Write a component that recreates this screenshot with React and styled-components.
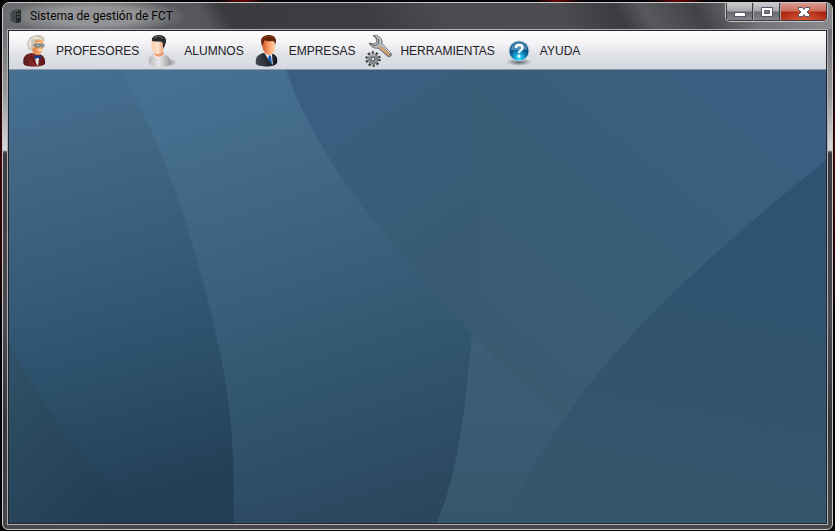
import React from "react";
import styled, { createGlobalStyle } from "styled-components";

const GlobalStyle = createGlobalStyle`
  * { box-sizing: border-box; }
  html, body { margin: 0; background: #080305; }
`;

const Desktop = styled.div`
  display: flex;
  min-height: 100vh;
  padding: 2px 2px 1px;
  background:
    radial-gradient(ellipse 22px 4px at 242px 0, #7a0508, transparent),
    radial-gradient(ellipse 22px 4px at 558px 0, #7a0508, transparent),
    radial-gradient(ellipse 26px 4px at 678px 0, #7a0508, transparent),
    linear-gradient(#080305 50px, #3c0506 160px, #2a0305 250px, #050304 320px);
`;

const Frame = styled.section`
  flex: 1;
  display: flex;
  flex-direction: column;
  min-width: 0;
  padding: 0 4px 4px;
  border: 1px solid #c9c9cc;
  border-radius: 7px 7px 6px 6px;
  overflow: hidden;
  background:
    linear-gradient(#58595c 0, #77787b 40px, #98989a 90px, #d8d8da 147px, #505155 149px, #39393e 151px, #4a4a50 320px, #36363b 420px, #48484c 100%);
`;

const TitleBar = styled.header`
  display: flex;
  align-items: flex-start;
  height: 26px;
  margin: 0 -4px;
  padding: 0 4px 0 6px;
  background:
    radial-gradient(ellipse 92px 18px at 92px 13px, rgba(180, 180, 182, 0.6) 50%, rgba(180, 180, 182, 0) 100%),
    linear-gradient(60deg, #6d6e71 0, #55565a 180px, #3b3c40 200px, #3c3d41 320px, #4b4c50 390px, #4c4d51 490px, #3b3c40 540px, #58595c 565px, #424347 610px, #737478 655px, #89898c 710px);
`;

const Title = styled.h1`
  flex: 1;
  display: flex;
  align-items: center;
  gap: 7px;
  height: 26px;
  margin: 0;
  color: #050505;
  font: 400 12px/16px Roboto, "Open Sans", sans-serif;
  white-space: nowrap;
`;

const WindowControls = styled.div`
  display: flex;
  height: 19px;
  border: 1px solid #c4c4c6;
  border-top: 0;
  border-radius: 0 0 5px 5px;
  overflow: hidden;
`;

const ControlButton = styled.button`
  display: grid;
  place-items: center;
  width: ${({ $close }) => ($close ? "47px" : "27px")};
  height: 18px;
  padding: 0;
  border: 1px solid #3b3b40;
  border-top: 0;
  border-left: ${({ $first }) => ($first ? "1px solid #3b3b40" : "1px solid #a9a9ac")};
  background: ${({ $close }) =>
    $close
      ? "radial-gradient(ellipse at 50% 100%, rgba(230,105,60,.65), transparent 65%), linear-gradient(#d9998e, #c96f60 8px, #a9200d 9px, #bd3b25)"
      : "linear-gradient(#cbcbcd, #a7a7aa 8px, #68696d 9px, #85868a)"};
`;

const Client = styled.div`
  flex: 1;
  display: flex;
  flex-direction: column;
  border: 1px solid #25262b;
  outline: 1px solid #b0b0b4;
  margin: 1px;
`;

const MenuBar = styled.nav`
  display: flex;
  gap: 8px;
  height: 39px;
  padding: 4px 10px 2px;
  border-bottom: 1px solid #8c98a8;
  background: linear-gradient(#fdfdfd, #f4f4f6 12px, #dfe1e6 24px, #d5d8df);
`;

const MenuButton = styled.button`
  display: flex;
  align-items: center;
  gap: 5px;
  padding: 0;
  border: 0;
  background: none;
  color: #222226;
  font: 400 12px/16px "Liberation Sans", Arial, sans-serif;
  white-space: nowrap;
`;

const Workspace = styled.main`
  flex: 1;
  display: grid;
  min-height: 0;
  background: #36566e;
`;

const Wallpaper = styled.svg`
  display: block;
  width: 100%;
  height: 100%;
  min-height: 0;
`;

const Icon = ({ children, size = 32 }) => (
  <svg width={size} height={size} viewBox={`0 0 ${size} ${size}`} aria-hidden="true">
    {children}
  </svg>
);

const AppIcon = () => (
  <svg width="14" height="16" viewBox="0 0 14 16" aria-hidden="true">
    <path d="M3 3 8 1l4 1v12l-5 1-4-2z" fill="#1d2023" />
    <path d="m3 3 4 1v11l-4-2z" fill="#43484a" />
    <path d="m7 4 5-2v12l-5 1z" fill="#24292b" />
    <path d="M8 6h3M8 9h3" stroke="#5c725f" />
    <path d="m3 3 5-2 4 1-5 2z" fill="#55595a" />
    <path d="M2 4v9" stroke="#333" />
  </svg>
);

const ProfessorIcon = () => (
  <Icon>
    <defs>
      <linearGradient id="profSkin"><stop stopColor="#d87534" /><stop offset="1" stopColor="#ffc08c" /></linearGradient>
      <linearGradient id="profCoat"><stop stopColor="#541719" /><stop offset=".5" stopColor="#8e2b2b" /><stop offset="1" stopColor="#531617" /></linearGradient>
    </defs>
    <path d="M4.500 29c-1-6 1-10 8-11l7 1c5 1 7 4 6.500 10-2 3-19 4-21.500 0z" fill="url(#profCoat)" />
    <path d="m16 22 4 1-1 8-2-3z" fill="#e8e8ea" />
    <path d="m13 18 4 12-6-7zm8 3 1 10 2-8z" fill="#6d1c1e" />
    <path d="m15 20 4 1 3-1v4l-3-1-4 1z" fill="#173a87" />
    <path d="M12 7c0-5 13-6 13 1l-1 6c-1 4-3 6-6 6s-6-6-6-9z" fill="url(#profSkin)" />
    <path d="M13 15c-3 1-5-2-4-4-2-3-1-5 1-6 0-3 3-4 5-4 2-2 7-2 9 1 2 1 2 3 1 4-3-2-7-2-9 0 1 3 0 5-1 6z" fill="#cdc5b8" />
    <path d="M10 10c0-5 4-8 9-8m-8 11 1-6m3-4 8 1" stroke="#f8f3e7" fill="none" />
    <path d="M17 8h4m2 0h2" stroke="#f5eee3" strokeWidth="1" />
    <rect x="17" y="9" width="4" height="3" rx="1" fill="#a9bdc2" stroke="#3d5f71" strokeWidth=".8" />
    <rect x="22" y="9" width="3" height="3" rx="1" fill="#a9bdc2" stroke="#3d5f71" strokeWidth=".8" />
    <path d="M14 10h3" stroke="#625d59" />
    <path d="M18 15c2-2 5-1 6 1-2-1-4 0-6-1z" fill="#f5ebde" />
  </Icon>
);

const StudentIcon = () => (
  <Icon>
    <defs>
      <linearGradient id="studentSkin"><stop stopColor="#ffcfad" /><stop offset=".5" stopColor="#ffe3cf" /><stop offset="1" stopColor="#e18d5f" /></linearGradient>
      <linearGradient id="shirt"><stop stopColor="#b9b9bc" /><stop offset=".45" stopColor="#e7e7e9" /><stop offset="1" stopColor="#99999d" /></linearGradient>
      <radialGradient id="softShadow"><stop stopColor="#666970" stopOpacity=".8" /><stop offset="1" stopColor="#777" stopOpacity="0" /></radialGradient>
    </defs>
    <ellipse cx="21" cy="27.500" rx="9" ry="4" fill="url(#softShadow)" />
    <path d="M2 28c-1-5 1-7 5-9h9c5 1 8 4 8 10-3 4-20 4-22-1z" fill="url(#shirt)" />
    <path d="M8 16h8l1 4c-2 3-7 3-10 0z" fill="#e89f76" />
    <path d="M7 20c3 3 7 3 10 0" fill="none" stroke="#fff" />
    <path d="M4.500 6c1-5 13-5 13 1l-1 7c-1 3-3 5-6 5-3 0-6-4-6-6z" fill="url(#studentSkin)" />
    <path d="M5 6C4 2 8 0 12 0c5 0 7.500 3 7 7l-2 6-1-1c0-2 0-4-1-5-3-1-7 0-10-1z" fill="#292a2d" />
    <path d="M7 3c2-2 7-2 9 1" stroke="#77797c" fill="none" />
  </Icon>
);

const BusinessIcon = () => (
  <Icon>
    <defs>
      <linearGradient id="businessSkin"><stop stopColor="#cf5a27" /><stop offset=".55" stopColor="#ffa570" /><stop offset="1" stopColor="#ffd3aa" /></linearGradient>
      <linearGradient id="suit"><stop stopColor="#444a51" /><stop offset="1" stopColor="#11151b" /></linearGradient>
    </defs>
    <path d="M4 29c-1-6 1-9 7-11h8c5 2 7 4 6 10-2 5-19 4-21 1z" fill="url(#suit)" />
    <path d="m12 17 8 1 1 12-5-6z" fill="#e8eff8" />
    <path d="m17 20 2 1 1 9-4-6z" fill="#1457b0" />
    <path d="m11 18 4 5-2 1 4 6-7-9zm9 1 1 11 2-8z" fill="#292f37" />
    <path d="M10.500 7c0-5 12.500-6 12.500 1v6c-1 4-3 6-6 6s-6.500-5-6.500-8z" fill="url(#businessSkin)" />
    <path d="M10 12 9 6c0-4 4-6 8-6 4 0 7 2 7 6l-1 5c0-2 0-4-2-5-3 0-6 1-8-1-1 1-1 3-2 4z" fill="#64240b" />
    <path d="M11 4c2-3 8-4 11-1" stroke="#98471e" fill="none" />
  </Icon>
);

const ToolsIcon = () => (
  <Icon>
    <defs>
      <linearGradient id="steel" x1="0" y1="0" x2="1" y2="1"><stop stopColor="#eee" /><stop offset=".5" stopColor="#b1b3b4" /><stop offset="1" stopColor="#77797b" /></linearGradient>
    </defs>
    <path d="M10 .5c5-1 10 3 9 8l9 10c1 2-1 4-3 3L15 13c-3 1-7-1-9-5l5 1 3-2-1-4z" fill="url(#steel)" stroke="#696b6d" />
    <path d="m11 1 5 4-1 4-3 2-5-2" fill="none" stroke="#414447" strokeWidth=".8" />
    <path d="m17 12 9 8" stroke="#dfa05c" strokeWidth="2" />
    <path d="m19 10 8 8" stroke="#eee" />
    <circle cx="10" cy="24" r="6.500" fill="none" stroke="#3b3d3f" strokeWidth="2.500" strokeDasharray="2.200 1.884" />
    <circle cx="10" cy="24" r="4" fill="none" stroke="#838688" strokeWidth="3" />
    <circle cx="10" cy="24" r="2" fill="#dddfe3" stroke="#404244" />
    <path d="M6 22c1-2 4-3 6-1" fill="none" stroke="#dedede" />
  </Icon>
);

const HelpIcon = () => (
  <Icon>
    <defs>
      <radialGradient id="helpBlue" cx=".5" cy=".85"><stop stopColor="#46e8ff" /><stop offset=".45" stopColor="#16a3d9" /><stop offset="1" stopColor="#075287" /></radialGradient>
      <radialGradient id="helpShadow"><stop stopColor="#555a60" /><stop offset="1" stopColor="#777" stopOpacity="0" /></radialGradient>
    </defs>
    <ellipse cx="16" cy="27" rx="13" ry="4" fill="url(#helpShadow)" />
    <circle cx="16" cy="16" r="10.500" fill="#b4cddd" />
    <circle cx="16" cy="16" r="9.500" fill="url(#helpBlue)" />
    <path d="M8 15c0-10 16-10 16 0-5-2-10 1-16 0z" fill="#bfe4f5" opacity=".4" />
    <path d="M13 13c0-4 6.500-4 6.500 0 0 2-3.500 2-3.500 5" fill="none" stroke="#fff" strokeWidth="2.400" />
    <circle cx="16" cy="21" r="1.500" fill="#fff" />
  </Icon>
);

const menuItems = [
  { label: "PROFESORES", Picture: ProfessorIcon },
  { label: "ALUMNOS", Picture: StudentIcon },
  { label: "EMPRESAS", Picture: BusinessIcon },
  { label: "HERRAMIENTAS", Picture: ToolsIcon },
  { label: "AYUDA", Picture: HelpIcon },
];

const Curves = () => (
  <Wallpaper viewBox="0 0 817 453" preserveAspectRatio="none" aria-hidden="true">
    <defs>
      <linearGradient id="left" gradientUnits="userSpaceOnUse" x1="30" y1="0" x2="150" y2="440"><stop stopColor="#466f91" /><stop offset=".2" stopColor="#416785" /><stop offset=".45" stopColor="#385c77" /><stop offset=".65" stopColor="#2e526d" /><stop offset="1" stopColor="#223d55" /></linearGradient>
      <linearGradient id="middle" gradientUnits="userSpaceOnUse" x1="180" y1="0" x2="330" y2="470"><stop stopColor="#487191" /><stop offset=".2" stopColor="#436a89" /><stop offset=".4" stopColor="#3d627f" /><stop offset=".67" stopColor="#32566f" /><stop offset="1" stopColor="#2b465f" /></linearGradient>
      <linearGradient id="sky" gradientUnits="userSpaceOnUse" x1="450" y1="320" x2="710" y2="0"><stop stopColor="#395a70" /><stop offset=".4" stopColor="#3a5d76" /><stop offset=".75" stopColor="#3a5e7b" /><stop offset="1" stopColor="#3a5e80" /></linearGradient>
      <linearGradient id="center" gradientUnits="userSpaceOnUse" x1="340" y1="30" x2="450" y2="200"><stop stopColor="#395e80" /><stop offset=".5" stopColor="#395d79" /><stop offset="1" stopColor="#385a73" /></linearGradient>
      <linearGradient id="right" gradientUnits="userSpaceOnUse" x1="790" y1="100" x2="720" y2="453"><stop stopColor="#2f5273" /><stop offset=".4" stopColor="#30536f" /><stop offset="1" stopColor="#35556b" /></linearGradient>
      <linearGradient id="lower" x2="0" y2="1"><stop stopColor="#3c5f77" /><stop offset=".5" stopColor="#3a5b75" /><stop offset="1" stopColor="#36566b" /></linearGradient>
      <linearGradient id="fold" x2=".8" y2="1"><stop stopColor="#3b5b72" stopOpacity=".3" /><stop offset="1" stopColor="#37566b" stopOpacity="0" /></linearGradient>
      <linearGradient id="corner" x2=".7" y2="1"><stop stopColor="#305267" /><stop offset="1" stopColor="#223d54" /></linearGradient>
    </defs>
    <path d="M0 0h817v453H0z" fill="url(#sky)" />
    <path d="M277 0h181c14 80 12 170 5 263L277 110z" fill="url(#center)" />
    <path d="M463 263c28 31 58 59 90 87 32 32 70 65 107 103H428c22-55 30-125 35-190z" fill="url(#lower)" />
    <path d="M817 90c-70 56-142 119-192 173-30 31-53 61-72 89-18 28-40 60-58 101h322z" fill="url(#right)" />
    <path d="m553 352-58 101h165c-35-38-73-70-107-101z" fill="url(#fold)" />
    <path d="M0 0h277c31 93 112 183 186 263-6 65-12 136-35 190H0z" fill="url(#middle)" />
    <path d="M0 0h113c35 68 59 130 75 190 26 94 40 157 36 263H0z" fill="url(#left)" />
    <path d="M0 273c33 64 81 124 135 180H0z" fill="url(#corner)" />
  </Wallpaper>
);

export default function App() {
  return (
    <>
      <GlobalStyle />
      <Desktop>
        <Frame>
          <TitleBar>
            <Title><AppIcon />Sistema de gestión de FCT</Title>
            <WindowControls>
              <ControlButton $first aria-label="Minimizar">
                <svg width="14" height="12" viewBox="0 0 14 12"><rect x="1.500" y="6.500" width="11" height="4" fill="#fff" stroke="#55576a" /></svg>
              </ControlButton>
              <ControlButton aria-label="Maximizar">
                <svg width="14" height="12" viewBox="0 0 14 12"><path fillRule="evenodd" d="M1.500 1.500h11v9h-11zm3 3v3h5v-3z" fill="#fff" stroke="#55576a" /></svg>
              </ControlButton>
              <ControlButton $close aria-label="Cerrar">
                <svg width="14" height="12" viewBox="0 0 14 12"><path d="M1.500 1.500h4L7 3.500l1.500-2h4v2L10 6l2.500 2.500v2h-4L7 8.500l-1.500 2h-4v-2L4 6 1.500 3.500z" fill="#fff" stroke="#55576a" /></svg>
              </ControlButton>
            </WindowControls>
          </TitleBar>
          <Client>
            <MenuBar>
              {menuItems.map(({ label, Picture }) => (
                <MenuButton key={label}><Picture />{label}</MenuButton>
              ))}
            </MenuBar>
            <Workspace><Curves /></Workspace>
          </Client>
        </Frame>
      </Desktop>
    </>
  );
}
